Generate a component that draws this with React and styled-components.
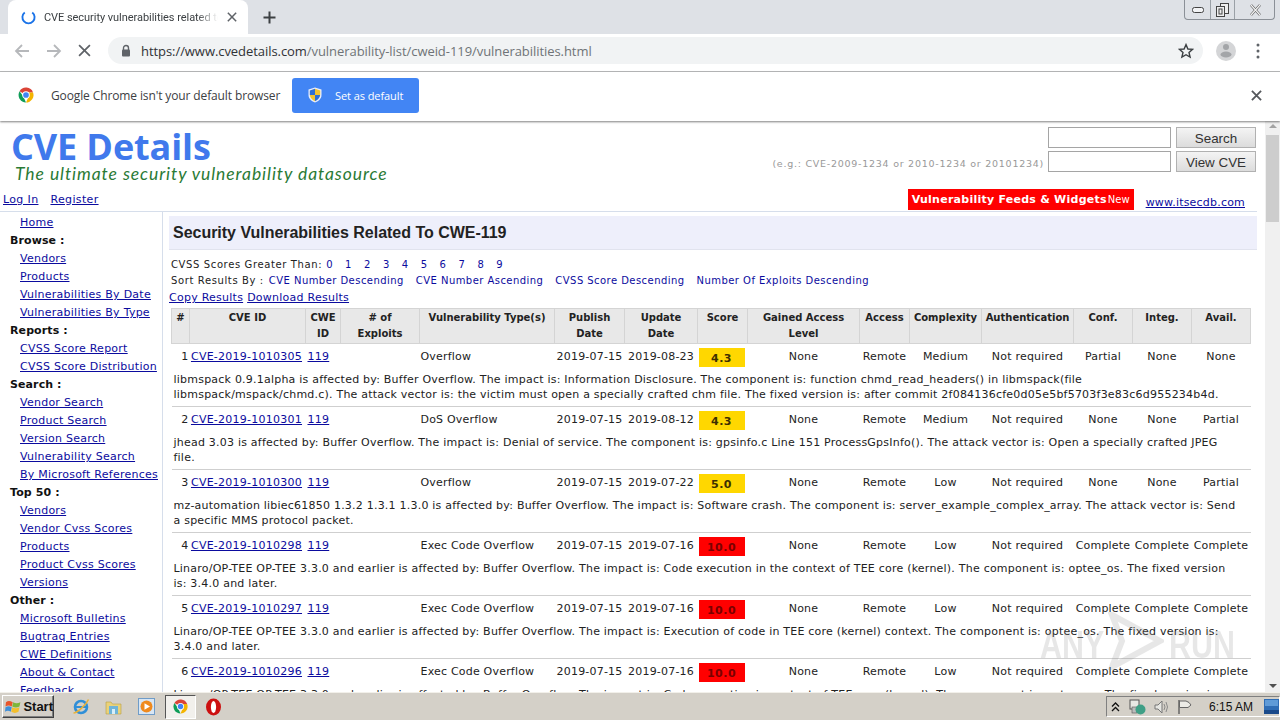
import React from "react";
import styled, { createGlobalStyle } from "styled-components";

const Global = createGlobalStyle`
  html, body { margin: 0; padding: 0; width: 1280px; height: 720px; overflow: hidden; background: #fff; }
  * { box-sizing: border-box; }
`;

const Screen = styled.div`
  width: 1280px; height: 720px; display: flex; flex-direction: column; overflow: hidden; position: relative;
  font-family: "DejaVu Sans", Verdana, sans-serif; font-size: 11px; color: #222;
`;

/* Browser chrome */
const TabStrip = styled.div`
  height: 34px; flex: none; background: #dee1e6; display: flex; align-items: flex-end; padding-left: 8px;
`;
const Tab = styled.div`
  width: 240px; height: 34px; background: #fff; border-radius: 8px 8px 0 0; display: flex; align-items: center; padding: 0 8px 0 13px;
`;
const TabTitle = styled.div`
  font: 11px Roboto, sans-serif; color: #3c4043; margin: 0 9px 0 8px; width: 174px; flex: none; white-space: nowrap; overflow: hidden; letter-spacing: -0.05px;
  -webkit-mask-image: linear-gradient(90deg, #000 88%, transparent);
  mask-image: linear-gradient(90deg, #000 88%, transparent);
`;
const NewTab = styled.div`
  margin-left: 15px; height: 34px; display: flex; align-items: center;
`;
const WindowControls = styled.div`
  margin-left: auto; margin-right: 5px; align-self: flex-start; width: 91px; height: 20px; display: grid; grid-template-columns: 25px 24px 42px;
  border: 1px solid #8b9097; border-top: none; border-radius: 0 0 4px 4px;
`;
const WinBtn = styled.div`
  display: flex; align-items: center; justify-content: center; border-left: ${(p) => (p.$first ? "none" : "1px solid #9aa0a6")};
`;
const Toolbar = styled.div`
  height: 38px; flex: none; background: #fff; border-bottom: 1px solid #b9babb; display: flex; align-items: center; padding: 0 0 4px 14px;
`;
const NavIcon = styled.div`
  width: 32px; display: flex; justify-content: flex-start; align-items: center;
`;
const Omnibox = styled.div`
  margin-left: -2px; width: 1095px; height: 27px; border-radius: 14px; background: #f1f3f4; display: flex; align-items: center; padding: 0 9px 0 13px;
`;
const Url = styled.div`
  font: 13px "Open Sans", sans-serif; color: #6f7377; margin-left: 10px; letter-spacing: -0.06px; white-space: nowrap;
  b { font-weight: 400; color: #303236; }
`;
const StarSlot = styled.div`
  margin-left: auto; display: flex;
`;
const Avatar = styled.div`
  margin-left: 13px; width: 20px; height: 20px; border-radius: 50%; background: #d4d5d7; display: flex; align-items: center; justify-content: center;
`;
const Dots = styled.div`
  margin-left: 20px; display: flex;
`;
const InfoBar = styled.div`
  height: 49px; flex: none; background: #fff; display: flex; align-items: center; padding: 0 18px 3px 17px;
  box-shadow: 0 1px 2px rgba(0,0,0,.5); position: relative; z-index: 2;
`;
const InfoText = styled.div`
  font: 12px "Open Sans", sans-serif; color: #3c4043; margin-left: 16px; width: 241px; white-space: nowrap; letter-spacing: -0.12px;
`;
const DefaultButton = styled.div`
  width: 127px; height: 35px; background: #4285f4; border-radius: 3px; display: flex; align-items: center; padding-left: 16px;
  color: #fff; font: 11px "Open Sans", sans-serif; gap: 13px; letter-spacing: -0.08px;
`;
const InfoClose = styled.div`
  margin-left: auto; display: flex;
`;

/* Page */
const Viewport = styled.div`
  flex: 1; min-height: 0; display: flex; background: #fff;
`;
const Page = styled.div`
  flex: 1; min-width: 0; overflow: hidden; display: flex; flex-direction: column; padding-top: 6px;
`;
const Scrollbar = styled.div`
  width: 15px; flex: none; background: #f0f0f0; display: flex; flex-direction: column; align-items: center; justify-content: space-between; padding: 3px 0 4px; position: relative;
`;
const ScrollThumb = styled.div`
  position: absolute; top: 14px; left: 1px; width: 13px; height: 87px; background: #cdcdcd;
`;
const Arrow = styled.div`
  width: 0; height: 0; border-left: 4px solid transparent; border-right: 4px solid transparent;
  ${(p) => (p.$up ? "border-bottom: 4px solid #a3a3a3;" : "border-top: 4px solid #505050;")}
`;
const Header = styled.div`
  height: 55px; flex: none; display: flex; justify-content: space-between; padding-left: 11px;
`;
const Brand = styled.div`
  display: flex; flex-direction: column;
`;
const LogoText = styled.div`
  font: 700 36px/40px "Open Sans", sans-serif; color: #4079ec; letter-spacing: -0.12px;
`;
const Tagline = styled.div`
  font: italic 17.5px/20px Lato, sans-serif; color: #2a7a35; margin: -3px 0 0 4px; letter-spacing: 0.93px; white-space: nowrap;
`;
const SearchArea = styled.div`
  width: 492px; display: grid; grid-template-columns: 271px 123px 80px; grid-template-rows: 21px 21px; column-gap: 5px; row-gap: 3px; padding-right: 9px;
  align-items: center; justify-content: end;
`;
const Hint = styled.div`
  font-size: 9.5px; color: #999; letter-spacing: 0.74px; white-space: nowrap; text-align: right; margin-top: 3px; margin-right: -1px;
`;
const SearchBox = styled.div`
  height: 21px; border: 1px solid #a5a5a5; background: #fff;
`;
const SearchBtn = styled.div`
  height: 21px; border: 1px solid #b1b1b1; background: linear-gradient(#f4f4f4, #dcdcdc); font: 13.4px "Liberation Sans", sans-serif; color: #333;
  display: flex; align-items: center; justify-content: center; padding-top: 1px;
`;
const SubHeader = styled.div`
  height: 30px; flex: none; display: flex; align-items: flex-start; padding: 7px 12px 0 3px; border-bottom: 1px solid #d6deeb; margin-right: 8px;
`;
const Link = styled.a`
  color: #0b0b9e; text-decoration: underline; letter-spacing: 0.25px; white-space: nowrap;
`;
const AuthLink = styled(Link)`
  margin-top: 4px; margin-right: 12px; line-height: 14px; letter-spacing: 0.35px;
`;
const Banner = styled.div`
  margin-left: auto; width: 226px; height: 21px; background: #f00; color: #fff; font: 700 11px/21px "DejaVu Sans", sans-serif; letter-spacing: 0.25px; padding-left: 4px; white-space: nowrap;
  small { font-size: 10px; font-weight: 400; letter-spacing: 0; margin-left: 1px; }
`;
const SiteLink = styled(Link)`
  margin-left: 12px; margin-top: 7px; line-height: 14px; letter-spacing: 0.2px;
`;
const Body = styled.div`
  flex: 1; min-height: 0; display: flex; overflow: hidden;
`;
const Side = styled.nav`
  width: 163px; flex: none; border-right: 1px solid #d6deeb; padding-top: 2px; overflow: hidden;
`;
const SideLink = styled.div`
  height: 18px; line-height: 18px; padding-left: 20px; white-space: nowrap;
`;
const SideHead = styled.div`
  height: 18px; line-height: 18px; padding-left: 10px; font-weight: 700; color: #111; letter-spacing: 0.1px;
`;
const Main = styled.main`
  flex: 1; min-width: 0; padding: 4px 8px 0 6px; overflow: hidden;
`;
const Title = styled.h1`
  margin: 0; height: 34px; background: #eeeffb; border-bottom: 1px solid #e1e3ee; font: 700 16px/34px "Liberation Sans", sans-serif; color: #222; padding-left: 4px; letter-spacing: -0.02px;
`;
const Line = styled.div`
  font-size: 10px; line-height: 16px; padding-left: 2px; letter-spacing: 0.62px; color: #222; white-space: nowrap;
  &:first-of-type { margin-top: 7px; }
`;
const BlueText = styled.span`
  color: #0b0b9e; letter-spacing: 0.45px; margin-left: ${(p) => p.$ml || "12px"};
`;
const DigitLink = styled(BlueText)`
  letter-spacing: 0.54px;
`;
const CopyLine = styled.div`
  line-height: 17px; display: flex; gap: 4px;
`;
const Table = styled.table`
  border-collapse: collapse; table-layout: fixed; width: 1079px; margin-left: 2px; margin-top: 2px;
`;
const Th = styled.th`
  background: #e8e8e8; border: 1px solid #d4d4d4; height: 35px; vertical-align: top; font: 700 10px/16px "DejaVu Sans", sans-serif; padding: 1px 0 0; color: #222; text-align: center; white-space: pre-line;
`;
const Td = styled.td`
  height: 25px; padding: 0 ${(p) => p.$pr || "0"} 0 ${(p) => p.$pl || "0"}; white-space: nowrap; text-align: ${(p) => p.$align || "center"}; vertical-align: middle; letter-spacing: 0.2px; color: #222;
`;
const Desc = styled.td`
  height: 38px; padding: 3px 2px 4px 2px; line-height: 15px; border-bottom: 1px solid #cfcfcf; letter-spacing: 0.22px; vertical-align: top; color: #222; white-space: pre-line;
`;
const ScoreBox = styled.div`
  width: 46px; height: 19px; margin: 2px 0 0 1px; background: ${(p) => p.$bg}; font-weight: 700; line-height: 21px; color: ${(p) => p.$fg}; letter-spacing: 0.5px; font-size: 11px; text-align: center;
`;
const Watermark = styled.div`
  position: absolute; left: 1040px; top: 612px; display: flex; align-items: center; opacity: 0.2; pointer-events: none; height: 58px;
`;
const WatermarkWord = styled.div`
  width: 68px; font: 700 38px/58px "Liberation Sans", sans-serif; color: #8a8a8a; transform: scaleX(0.8); transform-origin: left center; margin: 8px 0 0 ${(p) => p.$ml || "0"}; white-space: nowrap;
`;

/* Taskbar */
const Taskbar = styled.div`
  height: 28px; flex: none; background: #d4d0c8; border-top: 1px solid #f2f0ea; display: flex; align-items: center; padding-left: 2px; position: relative; z-index: 3;
`;
const StartBtn = styled.div`
  width: 52px; height: 23px; display: flex; align-items: center; gap: 2px; padding-left: 2px; font: 700 13px "Liberation Sans", sans-serif; color: #111;
  border: 1px solid; border-color: #fff #404040 #404040 #fff; box-shadow: inset -1px -1px 0 #808080;
`;
const Quick = styled.div`
  width: ${(p) => p.$w || "33px"}; height: 24px; display: flex; align-items: center; justify-content: center; margin-left: ${(p) => p.$ml || "0"};
  ${(p) => p.$active && "background: #f2f0ec; border: 1px solid; border-color: #555 #fff #fff #555;"}
`;
const Tray = styled.div`
  margin-left: auto; width: 174px; height: 21px; display: flex; align-items: center; padding: 0 0 0 4px; border: 1px solid; border-color: #808080 #fff #fff #808080;
`;
const Clock = styled.div`
  font: 12px "Liberation Sans", sans-serif; color: #111; margin-left: 17px; white-space: nowrap; flex: none;
`;
const TrayIcon = styled.div`
  display: flex; flex: none; margin-left: ${(p) => p.$ml || "0"};
`;

/* Icons */
const ChromeLogo = ({ s = 18 }) => (
  <svg width={s} height={s} viewBox="0 0 24 24">
    <path d="M12 12 L3.4 7 A10 10 0 0 1 21.4 8.5 L12 8.5Z" fill="#db4437" />
    <path d="M12 22 A10 10 0 0 1 3.4 7 L8.5 14Z" fill="#0f9d58" />
    <path d="M12 22 A10 10 0 0 0 21.4 8.5 L12 8.5 L15.5 14Z" fill="#f4b400" />
    <circle cx="12" cy="12" r="5" fill="#fff" />
    <circle cx="12" cy="12" r="3.8" fill="#4285f4" />
  </svg>
);
const Shield = () => (
  <svg width="14" height="16" viewBox="0 0 14 16">
    <path d="M7 0.5 L13.5 2.5 V8 C13.5 12 10 14.5 7 15.5 C4 14.5 .5 12 .5 8 V2.5Z" fill="#e9eefb" />
    <path d="M7 1.8 V8 H1.8 V3.4Z" fill="#2f6fd6" />
    <path d="M7 1.8 L12.2 3.4 V8 H7Z" fill="#f4c430" />
    <path d="M7 8 H1.8 C2 11 4.5 13.2 7 14.2Z" fill="#f4c430" />
    <path d="M7 8 H12.2 C12 11 9.5 13.2 7 14.2Z" fill="#2f6fd6" />
  </svg>
);
const X = ({ s = 12, c = "#5f6368", w = 1.8 }) => (
  <svg width={s} height={s} viewBox="0 0 12 12"><path d="M1 1 L11 11 M11 1 L1 11" stroke={c} strokeWidth={w} fill="none" /></svg>
);
const WinLogo = () => (
  <svg width="17" height="16" viewBox="0 0 17 16">
    <path d="M1 3 C3 1.5 5 1.5 8 3 L7 7.5 C4.5 6 3 6 0.5 7.5Z" fill="#e8552a" />
    <path d="M8.5 3 C11 4.5 13 4.5 16 3 L15 7.5 C12.5 9 10 9 7.5 7.5Z" fill="#7db63a" />
    <path d="M0.5 8.3 C3 7 4.5 7 7 8.3 L6 13 C4 11.5 2 11.5 0 13Z" fill="#3f8fd8" />
    <path d="M7.5 8.3 C10 9.8 12.5 9.8 15 8.3 L14 13 C11.5 14.5 9 14.5 6.5 13Z" fill="#f3bf2d" />
  </svg>
);

const sidebar = [
  ["l", "Home"], ["h", "Browse :"], ["l", "Vendors"], ["l", "Products"], ["l", "Vulnerabilities By Date"], ["l", "Vulnerabilities By Type"],
  ["h", "Reports :"], ["l", "CVSS Score Report"], ["l", "CVSS Score Distribution"],
  ["h", "Search :"], ["l", "Vendor Search"], ["l", "Product Search"], ["l", "Version Search"], ["l", "Vulnerability Search"], ["l", "By Microsoft References"],
  ["h", "Top 50 :"], ["l", "Vendors"], ["l", "Vendor Cvss Scores"], ["l", "Products"], ["l", "Product Cvss Scores"], ["l", "Versions"],
  ["h", "Other :"], ["l", "Microsoft Bulletins"], ["l", "Bugtraq Entries"], ["l", "CWE Definitions"], ["l", "About & Contact"], ["l", "Feedback"],
];

const cols = [18, 116, 35, 79, 135, 70, 73, 50, 112, 50, 72, 92, 59, 59, 59];
const heads = ["#", "CVE ID", "CWE\nID", "# of\nExploits", "Vulnerability Type(s)", "Publish\nDate", "Update\nDate", "Score", "Gained Access\nLevel", "Access", "Complexity", "Authentication", "Conf.", "Integ.", "Avail."];

const rows = [
  { n: 1, id: "CVE-2019-1010305", type: "Overflow", up: "2019-08-23", score: "4.3", cx: "Medium", c: "Partial", i: "None", a: "None",
    d: "libmspack 0.9.1alpha is affected by: Buffer Overflow. The impact is: Information Disclosure. The component is: function chmd_read_headers() in libmspack(file\nlibmspack/mspack/chmd.c). The attack vector is: the victim must open a specially crafted chm file. The fixed version is: after commit 2f084136cfe0d05e5bf5703f3e83c6d955234b4d." },
  { n: 2, id: "CVE-2019-1010301", type: "DoS Overflow", up: "2019-08-12", score: "4.3", cx: "Medium", c: "None", i: "None", a: "Partial",
    d: "jhead 3.03 is affected by: Buffer Overflow. The impact is: Denial of service. The component is: gpsinfo.c Line 151 ProcessGpsInfo(). The attack vector is: Open a specially crafted JPEG\nfile." },
  { n: 3, id: "CVE-2019-1010300", type: "Overflow", up: "2019-07-22", score: "5.0", cx: "Low", c: "None", i: "None", a: "Partial",
    d: "mz-automation libiec61850 1.3.2 1.3.1 1.3.0 is affected by: Buffer Overflow. The impact is: Software crash. The component is: server_example_complex_array. The attack vector is: Send\na specific MMS protocol packet." },
  { n: 4, id: "CVE-2019-1010298", type: "Exec Code Overflow", up: "2019-07-16", score: "10.0", cx: "Low", c: "Complete", i: "Complete", a: "Complete",
    d: "Linaro/OP-TEE OP-TEE 3.3.0 and earlier is affected by: Buffer Overflow. The impact is: Code execution in the context of TEE core (kernel). The component is: optee_os. The fixed version\nis: 3.4.0 and later." },
  { n: 5, id: "CVE-2019-1010297", type: "Exec Code Overflow", up: "2019-07-16", score: "10.0", cx: "Low", c: "Complete", i: "Complete", a: "Complete",
    d: "Linaro/OP-TEE OP-TEE 3.3.0 and earlier is affected by: Buffer Overflow. The impact is: Execution of code in TEE core (kernel) context. The component is: optee_os. The fixed version is:\n3.4.0 and later." },
  { n: 6, id: "CVE-2019-1010296", type: "Exec Code Overflow", up: "2019-07-16", score: "10.0", cx: "Low", c: "Complete", i: "Complete", a: "Complete",
    d: "Linaro/OP-TEE OP-TEE 3.3.0 and earlier is affected by: Buffer Overflow. The impact is: Code execution in context of TEE core (kernel). The component is: optee_os. The fixed version is:\n3.4.0 and later." },
];

const scoreStyle = (s) => (s === "10.0" ? { bg: "#ff0000", fg: "#7a0000" } : { bg: "#ffd700", fg: "#3d2f00" });

export default function App() {
  return (
    <Screen>
      <Global />
      <TabStrip>
        <Tab>
          <svg width="15" height="15" viewBox="0 0 16 16"><path d="M4 2.6 A6.5 6.5 0 1 0 12 2.6" fill="none" stroke="#1a73e8" strokeWidth="2" /></svg>
          <TabTitle>CVE security vulnerabilities related to CWE</TabTitle>
          <X s={10} />
        </Tab>
        <NewTab>
          <svg width="13" height="13" viewBox="0 0 13 13"><path d="M6.5 0.5 V12.5 M0.5 6.5 H12.5" stroke="#3c4043" strokeWidth="2" /></svg>
        </NewTab>
        <WindowControls>
          <WinBtn $first><svg width="12" height="6" viewBox="0 0 12 6"><rect x=".5" y=".5" width="11" height="5" rx="2" fill="#f2f3f5" stroke="#444" /></svg></WinBtn>
          <WinBtn><svg width="13" height="14" viewBox="0 0 13 14"><rect x="4.5" y=".5" width="8" height="10" fill="#eee" stroke="#444" /><rect x=".5" y="3.5" width="8" height="10" fill="#eee" stroke="#444" /><rect x="3" y="6" width="3" height="5" fill="none" stroke="#444" /></svg></WinBtn>
          <WinBtn><svg width="13" height="12" viewBox="0 0 13 12"><path d="M2 1 L11 11 M11 1 L2 11" stroke="#555" strokeWidth="2.6" /><path d="M2 1 L11 11 M11 1 L2 11" stroke="#f4f4f4" strokeWidth="1.2" /></svg></WinBtn>
        </WindowControls>
      </TabStrip>
      <Toolbar>
        <NavIcon><svg width="16" height="16" viewBox="0 0 16 16"><path d="M15 8 H2 M8 2 L2 8 L8 14" stroke="#b6b8bb" strokeWidth="1.8" fill="none" /></svg></NavIcon>
        <NavIcon><svg width="16" height="16" viewBox="0 0 16 16"><path d="M1 8 H14 M8 2 L14 8 L8 14" stroke="#b6b8bb" strokeWidth="1.8" fill="none" /></svg></NavIcon>
        <NavIcon><X s={13} c="#5f6368" w={1.6} /></NavIcon>
        <Omnibox>
          <svg width="10" height="13" viewBox="0 0 10 13"><path d="M2.5 6 V4 a2.5 2.5 0 0 1 5 0 V6" fill="none" stroke="#5f6368" strokeWidth="1.4" /><rect x="1" y="5.5" width="8" height="7" rx="1" fill="#5f6368" /></svg>
          <Url><b>https://www.cvedetails.com</b>/vulnerability-list/cweid-119/vulnerabilities.html</Url>
          <StarSlot><svg width="16" height="16" viewBox="0 0 16 16"><path d="M8 1.6 L9.9 6 L14.6 6.4 L11 9.5 L12.1 14.1 L8 11.7 L3.9 14.1 L5 9.5 L1.4 6.4 L6.1 6Z" fill="none" stroke="#3c4043" strokeWidth="1.4" /></svg></StarSlot>
        </Omnibox>
        <Avatar><svg width="14" height="17" viewBox="0 0 14 17"><circle cx="7" cy="5" r="3" fill="#a3a5a8" /><ellipse cx="7" cy="12.5" rx="5.5" ry="3" fill="#a3a5a8" /></svg></Avatar>
        <Dots><svg width="4" height="16" viewBox="0 0 4 16"><circle cx="2" cy="2" r="1.5" fill="#5f6368" /><circle cx="2" cy="8" r="1.5" fill="#5f6368" /><circle cx="2" cy="14" r="1.5" fill="#5f6368" /></svg></Dots>
      </Toolbar>
      <InfoBar>
        <ChromeLogo />
        <InfoText>Google Chrome isn't your default browser</InfoText>
        <DefaultButton><Shield />Set as default</DefaultButton>
        <InfoClose><X s={11} c="#55585c" w={2} /></InfoClose>
      </InfoBar>

      <Viewport>
        <Page>
          <Header>
            <Brand>
              <LogoText>CVE Details</LogoText>
              <Tagline>The ultimate security vulnerability datasource</Tagline>
            </Brand>
            <SearchArea>
              <div />
              <SearchBox />
              <SearchBtn>Search</SearchBtn>
              <Hint>(e.g.: CVE-2009-1234 or 2010-1234 or 20101234)</Hint>
              <SearchBox />
              <SearchBtn>View CVE</SearchBtn>
            </SearchArea>
          </Header>
          <SubHeader>
            <AuthLink>Log In</AuthLink>
            <AuthLink>Register</AuthLink>
            <Banner>Vulnerability Feeds &amp; Widgets<small>New</small></Banner>
            <SiteLink>www.itsecdb.com</SiteLink>
          </SubHeader>
          <Body>
            <Side>
              {sidebar.map(([k, t], i) =>
                k === "h" ? <SideHead key={i}>{t}</SideHead> : <SideLink key={i}><Link>{t}</Link></SideLink>
              )}
            </Side>
            <Main>
              <Title>Security Vulnerabilities Related To CWE-119</Title>
              <Line>
                CVSS Scores Greater Than:
                {[0, 1, 2, 3, 4, 5, 6, 7, 8, 9].map((n) => <DigitLink key={n} $ml={n === 0 ? "4px" : "12px"}>{n}</DigitLink>)}
              </Line>
              <Line>
                Sort Results By :
                <BlueText $ml="5px">CVE Number Descending</BlueText>
                <BlueText>CVE Number Ascending</BlueText>
                <BlueText>CVSS Score Descending</BlueText>
                <BlueText>Number Of Exploits Descending</BlueText>
              </Line>
              <CopyLine>
                <Link>Copy Results</Link>
                <Link>Download Results</Link>
              </CopyLine>
              <Table>
                <colgroup>{cols.map((w, i) => <col key={i} style={{ width: w }} />)}</colgroup>
                <thead>
                  <tr>{heads.map((h) => <Th key={h}>{h}</Th>)}</tr>
                </thead>
                <tbody>
                  {rows.map((r) => {
                    const st = scoreStyle(r.score);
                    return (
                      <React.Fragment key={r.n}>
                        <tr>
                          <Td $align="right" $pr="1px">{r.n}</Td>
                          <Td $pr="2px"><Link>{r.id}</Link></Td>
                          <Td $align="left" $pl="2px"><Link>119</Link></Td>
                          <Td />
                          <Td $align="left" $pl="1px">{r.type}</Td>
                          <Td>2019-07-15</Td>
                          <Td>{r.up}</Td>
                          <Td><ScoreBox $bg={st.bg} $fg={st.fg}>{r.score}</ScoreBox></Td>
                          <Td>None</Td>
                          <Td>Remote</Td>
                          <Td>{r.cx}</Td>
                          <Td>Not required</Td>
                          <Td>{r.c}</Td>
                          <Td>{r.i}</Td>
                          <Td>{r.a}</Td>
                        </tr>
                        <tr><Desc colSpan={15}>{r.d}</Desc></tr>
                      </React.Fragment>
                    );
                  })}
                </tbody>
              </Table>
            </Main>
          </Body>
        </Page>
        <Scrollbar>
          <Arrow $up />
          <ScrollThumb />
          <Arrow />
        </Scrollbar>
      </Viewport>

      <Taskbar>
        <StartBtn><WinLogo />Start</StartBtn>
        <Quick $ml="10px">
          <svg width="18" height="18" viewBox="0 0 18 18"><circle cx="9" cy="9" r="6" fill="none" stroke="#2f8fd8" strokeWidth="2.6" /><path d="M4 9 H14" stroke="#2f8fd8" strokeWidth="2" /><path d="M1.5 15 C5 15 14 7 16.5 1.5" fill="none" stroke="#e8b23a" strokeWidth="1.6" /></svg>
        </Quick>
        <Quick>
          <svg width="17" height="16" viewBox="0 0 17 16"><path d="M1 3 H6 L7.5 5 H16 V15 H1Z" fill="#e9d27a" stroke="#b89d45" strokeWidth=".6" /><rect x="4" y="7" width="9" height="8" fill="#6fb4d8" /><rect x="7" y="10" width="3" height="5" fill="#d8eef8" /></svg>
        </Quick>
        <Quick>
          <svg width="17" height="17" viewBox="0 0 17 17"><rect x=".5" y=".5" width="16" height="16" fill="#d8e6f4" stroke="#6f9cc8" /><circle cx="8.5" cy="8.5" r="6" fill="#ef8a1e" /><path d="M6.5 5.2 L12 8.5 L6.5 11.8Z" fill="#fff" /></svg>
        </Quick>
        <Quick $active $w="31px" $ml="2px"><ChromeLogo s={17} /></Quick>
        <Quick $ml="1px">
          <svg width="17" height="18" viewBox="0 0 17 18"><ellipse cx="8.5" cy="9" rx="7.5" ry="8.5" fill="#cc1010" /><ellipse cx="8.5" cy="9" rx="2.6" ry="6" fill="#fff" /></svg>
        </Quick>
        <Tray>
          <TrayIcon><svg width="9" height="10" viewBox="0 0 9 10"><path d="M1 4.5 L4.5 1 L8 4.5 M1 9 L4.5 5.5 L8 9" fill="none" stroke="#111" strokeWidth="1.3" /></svg></TrayIcon>
          <TrayIcon $ml="9px"><svg width="17" height="16" viewBox="0 0 17 16"><rect x="1" y="1" width="9" height="9" fill="#e8e8e4" stroke="#555" /><rect x="3" y="8" width="5" height="6" fill="#bbb" stroke="#555" strokeWidth=".6" /><circle cx="11.5" cy="10.5" r="5" fill="#3f9f86" /></svg></TrayIcon>
          <TrayIcon $ml="8px"><svg width="16" height="16" viewBox="0 0 16 16"><path d="M1 6 H4 L8 2 V14 L4 10 H1Z" fill="#e6e6e2" stroke="#777" /><path d="M10 5 Q12 8 10 11 M12 3 Q15 8 12 13" fill="none" stroke="#8a8a8a" /></svg></TrayIcon>
          <TrayIcon $ml="7px"><svg width="15" height="16" viewBox="0 0 15 16"><path d="M2 1 V15" stroke="#555" strokeWidth="1.3" /><path d="M2.5 2 H9 L12 3.5 L14 6 L11 8.5 H2.5Z" fill="#ecebe6" stroke="#666" /></svg></TrayIcon>
          <Clock>6:15 AM</Clock>
          <TrayIcon $ml="11px"><svg width="15" height="15" viewBox="0 0 15 15"><rect width="15" height="15" fill="#2f6db5" /><rect x="0" y="11" width="15" height="4" fill="#1a4a8a" /><rect x="1" y="1" width="13" height="6" fill="#5f9bd8" /></svg></TrayIcon>
        </Tray>
      </Taskbar>
      <Watermark>
        <WatermarkWord>ANY</WatermarkWord>
        <svg width="56" height="58" viewBox="0 0 56 58"><path d="M4 3 L52 29 L4 55 L14 29Z" fill="none" stroke="#8a8a8a" strokeWidth="6" /></svg>
        <WatermarkWord $ml="5px">RUN</WatermarkWord>
      </Watermark>
    </Screen>
  );
}
